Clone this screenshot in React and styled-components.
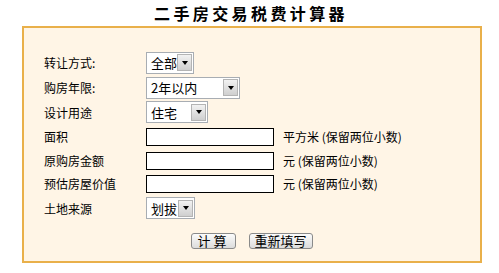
import React from 'react';
import styled, { createGlobalStyle } from 'styled-components';

const GlobalStyle = createGlobalStyle`
  body {
    margin: 0;
    background: #ffffff;
    font-family: 'Noto Sans CJK SC', 'Liberation Sans', sans-serif;
    color: #000000;
  }
`;

const Page = styled.div`
  width: 499px;
  height: 273px;
`;

const Title = styled.h1`
  margin: 0;
  height: 26px;
  line-height: 26px;
  text-align: center;
  font-size: 16px;
  font-weight: 700;
  letter-spacing: 3.4px;
  padding-left: 3px;
`;

const Panel = styled.div`
  box-sizing: border-box;
  margin-left: 22px;
  width: 460px;
  height: 237px;
  border: 2px solid #e9b04a;
  background: #fff5e6;
  padding: 22px 0 0 20px;
`;

const Row = styled.div`
  display: flex;
  align-items: center;
  height: ${(p) => p.$h}px;
  font-size: 12px;
`;

const Label = styled.div`
  width: 102px;
  flex-shrink: 0;
`;

const SelectBox = styled.div`
  box-sizing: border-box;
  display: flex;
  align-items: center;
  justify-content: space-between;
  width: ${(p) => p.$w}px;
  height: 22px;
  border: 1px solid #a8adb3;
  background: #ffffff;
  padding: 0 1px 0 4px;
  font-size: 13px;
`;

const DropButton = styled.span`
  box-sizing: border-box;
  display: flex;
  align-items: center;
  justify-content: center;
  width: 15px;
  height: 17px;
  border: 1px solid #b4b4b4;
  background: linear-gradient(#f2f2f2, #cfcfcf);

  &::after {
    content: '';
    border-left: 3.5px solid transparent;
    border-right: 3.5px solid transparent;
    border-top: 4px solid #000000;
  }
`;

const TextInput = styled.input`
  box-sizing: border-box;
  width: 128px;
  height: 18px;
  border: 1px solid #000000;
  background: #ffffff;
  padding: 0 2px;
  margin: 0;
`;

const Unit = styled.span`
  margin-left: 9px;
`;

const Actions = styled.div`
  display: flex;
  justify-content: center;
  gap: 13px;
  margin-top: 12px;
  padding-right: 20px;
`;

const Button = styled.button`
  box-sizing: border-box;
  height: 16px;
  padding: 0 5px;
  border: 1px solid #8a8a8a;
  border-radius: 3px;
  background: linear-gradient(#fbfbfb, #dcdcdc);
  font-family: inherit;
  font-size: 13px;
  line-height: 14px;
  color: #000000;
  letter-spacing: ${(p) => (p.$wide ? '3px' : '0')};
`;

const Select = ({ value, width }) => (
  <SelectBox $w={width}>
    <span>{value}</span>
    <DropButton />
  </SelectBox>
);

export default function App() {
  return (
    <Page>
      <GlobalStyle />
      <Title>二手房交易税费计算器</Title>
      <Panel>
        <Row $h={25}>
          <Label>转让方式:</Label>
          <Select value="全部" width={48} />
        </Row>
        <Row $h={25}>
          <Label>购房年限:</Label>
          <Select value="2年以内" width={94} />
        </Row>
        <Row $h={24}>
          <Label>设计用途</Label>
          <Select value="住宅" width={62} />
        </Row>
        <Row $h={25}>
          <Label>面积</Label>
          <TextInput />
          <Unit>平方米 (保留两位小数)</Unit>
        </Row>
        <Row $h={23}>
          <Label>原购房金额</Label>
          <TextInput />
          <Unit>元 (保留两位小数)</Unit>
        </Row>
        <Row $h={23}>
          <Label>预估房屋价值</Label>
          <TextInput />
          <Unit>元 (保留两位小数)</Unit>
        </Row>
        <Row $h={26}>
          <Label>土地来源</Label>
          <Select value="划拔" width={49} />
        </Row>
        <Actions>
          <Button $wide>计算</Button>
          <Button>重新填写</Button>
        </Actions>
      </Panel>
    </Page>
  );
}
